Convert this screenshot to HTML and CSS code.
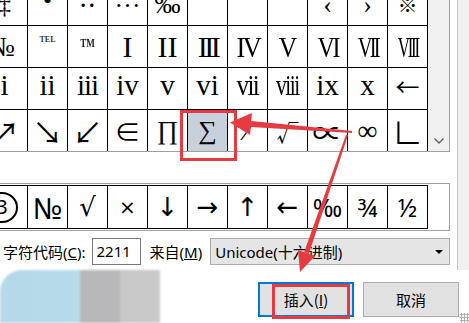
FILE: index.html
```html
<!DOCTYPE html>
<html lang="zh-CN">
<head>
    <meta charset="UTF-8">
    <title>符号</title>
    <link rel="stylesheet" href="styles.css">
</head>
<body>
<div class="dialog">
    <div class="top">
        <div class="main">
            <div class="charbox">
                <div class="grid-view">
                    <div class="grid">
                        <!-- row 1, top cut off -->
                        <div class="cell r1 first">‡</div>
                        <div class="cell r1 bullet">•</div>
                        <div class="cell r1 raise">‥</div>
                        <div class="cell r1 raise">…</div>
                        <div class="cell r1">‰</div>
                        <div class="cell r1"></div>
                        <div class="cell r1"></div>
                        <div class="cell r1"></div>
                        <div class="cell r1">‹</div>
                        <div class="cell r1">›</div>
                        <div class="cell r1 cjk">※</div>
                        <!-- row 2 -->
                        <div class="cell numero">№</div>
                        <div class="cell"><span class="tel">TEL</span></div>
                        <div class="cell"><span class="tm">TM</span></div>
                        <div class="cell up">I</div>
                        <div class="cell up">II</div>
                        <div class="cell up"><span class="rn rn-3">III</span></div>
                        <div class="cell up"><span class="rn rn-4">IV</span></div>
                        <div class="cell up"><span class="rn rn-5">V</span></div>
                        <div class="cell up"><span class="rn rn-6">VI</span></div>
                        <div class="cell up"><span class="rn rn-7">VII</span></div>
                        <div class="cell up"><span class="rn rn-8">VIII</span></div>
                        <!-- row 3 -->
                        <div class="cell low first">i</div>
                        <div class="cell low">ii</div>
                        <div class="cell low"><span class="rn rl-3">iii</span></div>
                        <div class="cell low">iv</div>
                        <div class="cell low">v</div>
                        <div class="cell low">vi</div>
                        <div class="cell low"><span class="rn rl-7">vii</span></div>
                        <div class="cell low"><span class="rn rl-8">viii</span></div>
                        <div class="cell low">ix</div>
                        <div class="cell low">x</div>
                        <div class="cell low cjk">←</div>
                        <!-- row 4 -->
                        <div class="cell cjk big first">↗</div>
                        <div class="cell cjk big">↘</div>
                        <div class="cell cjk big">↙</div>
                        <div class="cell cjk mid">∈</div>
                        <div class="cell op">∏</div>
                        <div class="cell op sel">∑</div>
                        <div class="cell">∕</div>
                        <div class="cell cjk">√</div>
                        <div class="cell cjk big">∝</div>
                        <div class="cell">∞</div>
                        <div class="cell cjk big">∟</div>
                    </div>
                </div>
                <div class="scrollbar">
                    <svg width="10" height="6" viewBox="0 0 10 6"><polyline points="0.5,0.5 5,5 9.5,0.5" fill="none" stroke="#606060" stroke-width="1.3"/></svg>
                </div>
            </div>

            <div class="recent">
                <div class="recent-row">
                    <div class="rcell"><span class="circ">3</span></div>
                    <div class="rcell num">№</div>
                    <div class="rcell sym">√</div>
                    <div class="rcell sym small">×</div>
                    <div class="rcell sym">↓</div>
                    <div class="rcell sym">→</div>
                    <div class="rcell sym">↑</div>
                    <div class="rcell sym">←</div>
                    <div class="rcell">‰</div>
                    <div class="rcell">¾</div>
                    <div class="rcell">½</div>
                </div>
            </div>

            <div class="code-row">
                <span class="label">字符代码(<u>C</u>):</span>
                <div class="code-input">2211</div>
                <span class="label from">来自(<u>M</u>)</span>
                <div class="select">
                    <span>Unicode(十六进制)</span>
                    <span class="caret"></span>
                </div>
            </div>
        </div>
        <div class="gutter"></div>
    </div>

    <div class="bottom">
        <div class="blob"></div>
        <button class="btn btn-default">插入(<u>I</u>)</button>
        <button class="btn">取消</button>
        <div class="grip"></div>
    </div>

    <!-- red annotations drawn over the dialog -->
    <svg class="marks" width="469" height="323" viewBox="0 0 469 323">
        <rect x="181.5" y="111.5" width="54" height="48" fill="none" stroke="#e63b40" stroke-width="3"/>
        <rect x="273.5" y="285.5" width="75" height="32" fill="none" stroke="#e63b40" stroke-width="3"/>
        <polygon points="251.2,121.1 352.1,131 351.9,133 250.8,127.1" fill="#e63b40"/>
        <polygon points="230,122.5 251.9,113.1 250.1,135.1" fill="#e63b40"/>
        <polygon points="308.9,253.8 348,135.3 346,134.7 304.1,252.2" fill="#e63b40"/>
        <polygon points="300,272 315,256 298,250" fill="#e63b40"/>
    </svg>
</div>
</body>
</html>
```

FILE: styles.css
```css
* {
    box-sizing: border-box;
    margin: 0;
    padding: 0;
}
body {
    width: 469px;
    height: 323px;
    overflow: hidden;
    background: #fff;
    color: #000;
    font-family: "Noto Sans", "Noto Sans CJK SC", sans-serif;
}
.dialog {
    position: relative;
    width: 469px;
    height: 323px;
}
.top {
    display: flex;
    height: 270px;
}
.main {
    width: 450px;
}
.gutter {
    flex: 1;
    margin-left: 7px;
    border-left: 1px solid #c8c8c8;
    background: #f0f0f0;
}

/* character grid */
.charbox {
    display: flex;
    height: 152px;
    border-right: 1px solid #a0a0a0;
    border-bottom: 1px solid #a0a0a0;
}
.grid-view {
    width: 428px;
    overflow: hidden;
}
.grid {
    display: grid;
    grid-template-columns: repeat(11, 40px);
    grid-auto-rows: 42px;
    margin: -16px 0 0 -12px;
}
.cell {
    display: flex;
    align-items: center;
    justify-content: center;
    border-right: 1px solid #000;
    border-bottom: 1px solid #000;
    font-family: "Liberation Serif", "DejaVu Serif", serif;
    font-size: 28px;
    line-height: 1;
    overflow: hidden;
}
.cell.first {
    padding-right: 6px;
}
.cell.numero {
    padding-right: 12px;
}
.cell.r1 {
    font-size: 26px;
}
.cell.raise {
    padding-bottom: 12px;
}
.cell.bullet {
    padding-bottom: 7px;
}
.cell.up {
    font-size: 30px;
}
.cell.low {
    font-size: 29px;
    padding-bottom: 6px;
}
.cell.cjk {
    font-family: "Noto Sans CJK SC", sans-serif;
    font-size: 22px;
    line-height: 1;
}
.cell.cjk.big {
    font-size: 30px;
}
.cell.cjk.mid {
    font-size: 26px;
}
.cell.r1.cjk {
    font-size: 20px;
}
.cell.low.cjk {
    font-size: 24px;
}
.cell.op {
    font-size: 26px;
}
.cell.sel {
    background: #c8d0dc;
}
.rn {
    display: inline-block;
}
.rn-3 { letter-spacing: -3.5px; }
.rn-4 { letter-spacing: -3px; transform: scaleX(.88); }
.rn-5 { transform: scaleX(.85); }
.rn-6 { letter-spacing: -3px; transform: scaleX(.8); }
.rn-7 { letter-spacing: -4px; transform: scaleX(.68); }
.rn-8 { letter-spacing: -4px; transform: scaleX(.56); }
.rl-3 { letter-spacing: -1px; }
.rl-7 { letter-spacing: -2px; transform: scaleX(.87); }
.rl-8 { letter-spacing: -2px; transform: scaleX(.74); }
.tel {
    font-size: 8px;
    font-weight: bold;
    margin-bottom: 14px;
    color: #333;
}
.tm {
    display: inline-block;
    font-size: 13px;
    font-weight: bold;
    margin-bottom: 8px;
    transform: scaleX(.7);
    color: #222;
}
.scrollbar {
    width: 21px;
    background: #f0f0f0;
    display: flex;
    align-items: flex-end;
    justify-content: center;
    padding-bottom: 7px;
}

/* recently used */
.recent {
    height: 48px;
    margin-top: 31px;
    padding: 1px 0;
    border-top: 1px solid #a0a0a0;
    border-bottom: 1px solid #a0a0a0;
    border-right: 1px solid #a0a0a0;
    overflow: hidden;
}
.recent-row {
    display: flex;
    margin-left: -12px;
}
.rcell {
    flex: none;
    width: 40px;
    height: 44px;
    display: flex;
    align-items: center;
    justify-content: center;
    border-top: 1px solid #000;
    border-bottom: 1px solid #000;
    border-right: 1px solid #000;
    font-family: "Noto Sans", "DejaVu Sans", sans-serif;
    font-size: 25px;
    line-height: 1;
}
.rcell.num {
    font-size: 29px;
}
.rcell.sym {
    font-family: "DejaVu Sans", sans-serif;
    font-size: 26px;
}
.rcell.small {
    font-size: 20px;
}
.circ {
    flex: none;
    width: 32px;
    height: 31px;
    margin-left: -11px;
    border: 2px solid #000;
    border-radius: 50%;
    display: flex;
    align-items: center;
    justify-content: center;
    font-size: 20px;
}

/* code row */
.code-row {
    display: flex;
    align-items: center;
    height: 27px;
    margin-top: 7px;
    font-size: 15px;
}
.label {
    margin-left: 3px;
    white-space: nowrap;
}
.code-input {
    width: 49px;
    height: 27px;
    margin-left: 6px;
    padding-left: 4px;
    border: 1px solid #7a7a7a;
    line-height: 25px;
}
.label.from {
    margin-left: 9px;
}
.select {
    flex: 1;
    height: 27px;
    margin-left: 8px;
    padding: 0 6px 0 4px;
    display: flex;
    align-items: center;
    justify-content: space-between;
    background: #e5e5e5;
    border: 1px solid #adadad;
}
.caret {
    width: 0;
    height: 0;
    border-left: 4px solid transparent;
    border-right: 4px solid transparent;
    border-top: 4px solid #000;
}

/* buttons */
.bottom {
    display: flex;
    height: 53px;
}
.blob {
    width: 160px;
    height: 53px;
    border-radius: 22px 0 0 0;
    background: linear-gradient(90deg, #b5d9e8 0, #b7dbe9 80px, #b8b8ba 80px, #b8b8ba 120px, #c8c8c8 120px, #cacaca 160px);
    filter: blur(1px);
}
.btn {
    width: 96px;
    height: 35px;
    margin-top: 12px;
    border: 1px solid #adadad;
    background: #e1e1e1;
    font-family: "Noto Sans CJK SC", sans-serif;
    font-size: 15px;
    color: #000;
}
.btn-default {
    margin-left: 98px;
    border: 2px solid #0078d7;
}
.btn + .btn {
    margin-left: 9px;
}
.grip {
    width: 9px;
    height: 10px;
    margin-left: 1px;
    align-self: flex-end;
    background: radial-gradient(circle, #b0b0b0 1px, transparent 1.2px) 0 0 / 3px 3px;
}
.marks {
    position: absolute;
    left: 0;
    top: 0;
    pointer-events: none;
}
```
